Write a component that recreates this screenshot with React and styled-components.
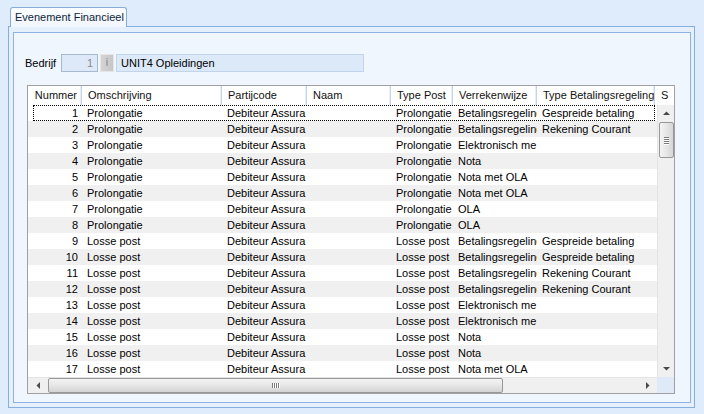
import React from 'react';
import styled, { createGlobalStyle } from 'styled-components';

const Global = createGlobalStyle`
  html, body { margin: 0; padding: 0; }
  body {
    background: #dfecfc;
    font-family: "Liberation Sans", Arial, sans-serif;
    font-size: 11px;
    color: #000;
  }
`;

const Page = styled.div`
  width: 704px;
  height: 414px;
  box-sizing: border-box;
  padding: 7px 9px 0 8px;
  display: flex;
  flex-direction: column;
`;

const TabStrip = styled.div`
  display: flex;
  height: 19px;
  padding-left: 2px;
  position: relative;
  z-index: 1;
`;

const Tab = styled.div`
  width: 117px;
  height: 20px;
  box-sizing: border-box;
  border: 1px solid #88acd8;
  border-bottom: none;
  border-radius: 3px 3px 0 0;
  background: linear-gradient(#fbfdff, #f1f6fd);
  padding: 2px 0 0 4px;
  line-height: 14px;
  color: #0f1e3c;
  white-space: nowrap;
`;

const Panel = styled.div`
  height: 382px;
  box-sizing: border-box;
  border: 1px solid #86aee0;
  background: #e6f0fd;
  padding: 5px 3px 4px 4px;
  display: flex;
`;

const GroupBox = styled.div`
  flex: 1;
  border: 1px solid #8db3e4;
  background: #eff6fe;
  padding: 21px 14px 0 13px;
  display: flex;
  flex-direction: column;
`;

const FieldRow = styled.div`
  display: flex;
  align-items: center;
  height: 18px;
`;

const Label = styled.span`
  width: 36px;
  margin-left: -2px;
`;

const Input = styled.div`
  box-sizing: border-box;
  width: ${p => p.$w}px;
  height: 18px;
  border: 1px solid ${p => p.$border || '#a8b8cc'};
  background: ${p => p.$bg || '#dde9f8'};
  text-align: ${p => p.$align || 'left'};
  padding: 0 4px;
  line-height: 16px;
  color: ${p => p.$color || '#000'};
  margin-right: 2px;
`;

const InfoButton = styled.div`
  box-sizing: border-box;
  width: 14px;
  height: 18px;
  background: linear-gradient(90deg, #d4d4d4, #c6c6c6);
  border: 1px solid #e6e6e6;
  color: #9c9c9c;
  font-weight: bold;
  text-align: center;
  line-height: 16px;
  margin-right: 2px;
  font-size: 10px;
`;

const Grid = styled.div`
  margin-top: 13px;
  width: 648px;
  height: 309px;
  box-sizing: border-box;
  border: 1px solid #a0a0a0;
  background: #fff;
  display: grid;
  grid-template-columns: 1fr 17px;
  grid-template-rows: 19px 1fr 16px;
  overflow: hidden;
`;

const HeaderRow = styled.div`
  grid-column: 1 / 3;
  display: flex;
  background: #fff;
  overflow: hidden;
`;

const HeadCell = styled.div`
  flex: 0 0 ${p => p.$w}px;
  box-sizing: border-box;
  height: 19px;
  line-height: 19px;
  padding: 0 ${p => (p.$right ? '4px' : '0')} 0 ${p => (p.$right ? '0' : '6px')};
  text-align: ${p => (p.$right ? 'right' : 'left')};
  border-right: 1px solid #c3d5ec;
  box-shadow: inset -1px 0 0 #e6eef8;
  white-space: nowrap;
  overflow: hidden;
  color: #111;
`;

const Body = styled.div`
  overflow: hidden;
`;

const Row = styled.div`
  display: flex;
  height: 16px;
  line-height: 16px;
  background: ${p => (p.$alt ? '#f0f0f0' : '#fff')};
  position: relative;
`;

const Focus = styled.div`
  position: absolute;
  left: 5px;
  top: 0;
  width: 622px;
  height: 16px;
  box-sizing: border-box;
  border: 1px dotted #000;
  pointer-events: none;
`;

const Cell = styled.div`
  flex: 0 0 ${p => p.$w}px;
  box-sizing: border-box;
  padding: 0 ${p => (p.$right ? '4px' : '0')} 0 ${p => (p.$right ? '0' : '5px')};
  text-align: ${p => (p.$right ? 'right' : 'left')};
  white-space: nowrap;
  overflow: hidden;
`;

const VScroll = styled.div`
  background: #f0f0f0;
  border-left: 1px solid #e4e4e4;
  display: flex;
  flex-direction: column;
  align-items: center;
`;

const HScroll = styled.div`
  background: #f0f0f0;
  border-top: 1px solid #e4e4e4;
  display: flex;
  align-items: center;
`;

const Arrow = styled.div`
  width: ${p => (p.$h ? '19px' : '16px')};
  height: ${p => (p.$h ? '15px' : '16px')};
  display: flex;
  align-items: center;
  justify-content: center;
  flex: none;
`;

const VThumb = styled.div`
  margin-top: 1px;
  width: 15px;
  height: 36px;
  box-sizing: border-box;
  border: 1px solid #989898;
  border-radius: 2px;
  background: linear-gradient(90deg, #f4f4f4, #e6e6e6 50%, #d6d6d6);
  display: flex;
  flex-direction: column;
  align-items: center;
  justify-content: center;
  gap: 1px;
`;

const HThumb = styled.div`
  margin-left: 1px;
  width: 455px;
  height: 15px;
  box-sizing: border-box;
  border: 1px solid #989898;
  border-radius: 2px;
  background: linear-gradient(#f4f4f4, #e6e6e6 50%, #d4d4d4);
  display: flex;
  align-items: center;
  justify-content: center;
  gap: 1px;
`;

const Grip = styled.span`
  display: block;
  background: #7a7a7a;
  width: ${p => (p.$v ? '1px' : '5px')};
  height: ${p => (p.$v ? '5px' : '1px')};
  box-shadow: ${p => (p.$v ? '1px 0 0 #fff' : '0 1px 0 #fff')};
`;

const Spacer = styled.div`
  flex: 1;
`;

const Corner = styled.div`
  background: #dfe9f8;
`;

const cols = [
  { k: 'n', t: 'Nummer', w: 54, right: true },
  { k: 'o', t: 'Omschrijving', w: 140 },
  { k: 'p', t: 'Partijcode', w: 85 },
  { k: 'm', t: 'Naam', w: 84 },
  { k: 'tp', t: 'Type Post', w: 62 },
  { k: 'v', t: 'Verrekenwijze', w: 84 },
  { k: 'tb', t: 'Type Betalingsregeling', w: 118 },
  { k: 's', t: 'S', w: 40 },
];

const raw = [
  ['Prolongatie', 'Betalingsregeling', 'Gespreide betaling'],
  ['Prolongatie', 'Betalingsregeling', 'Rekening Courant'],
  ['Prolongatie', 'Elektronisch me', ''],
  ['Prolongatie', 'Nota', ''],
  ['Prolongatie', 'Nota met OLA', ''],
  ['Prolongatie', 'Nota met OLA', ''],
  ['Prolongatie', 'OLA', ''],
  ['Prolongatie', 'OLA', ''],
  ['Losse post', 'Betalingsregeling', 'Gespreide betaling'],
  ['Losse post', 'Betalingsregeling', 'Gespreide betaling'],
  ['Losse post', 'Betalingsregeling', 'Rekening Courant'],
  ['Losse post', 'Betalingsregeling', 'Rekening Courant'],
  ['Losse post', 'Elektronisch me', ''],
  ['Losse post', 'Elektronisch me', ''],
  ['Losse post', 'Nota', ''],
  ['Losse post', 'Nota', ''],
  ['Losse post', 'Nota met OLA', ''],
];

const rows = raw.map((r, i) => ({
  n: String(i + 1),
  o: r[0],
  p: 'Debiteur Assura',
  m: '',
  tp: r[0],
  v: r[1],
  tb: r[2],
  s: '',
}));

const Tri = ({ dir }) => {
  const pts = {
    up: '0,4 3.5,0.5 7,4',
    down: '0,0 3.5,3.5 7,0',
    left: '4,0 0.5,3.5 4,7',
    right: '0,0 3.5,3.5 0,7',
  }[dir];
  const vert = dir === 'up' || dir === 'down';
  return (
    <svg width={vert ? 7 : 4} height={vert ? 4 : 7} viewBox={vert ? '0 0 7 4' : '0 0 4 7'}>
      <polygon points={pts} fill="#4a4a4a" />
    </svg>
  );
};

export default function App() {
  return (
    <>
      <Global />
      <Page>
        <TabStrip>
          <Tab>Evenement Financieel</Tab>
        </TabStrip>
        <Panel>
          <GroupBox>
            <FieldRow>
              <Label>Bedrijf</Label>
              <Input $w={37} $align="right" $color="#8a8a8a" $border="#a9b9cd" $bg="#dde9f8">1</Input>
              <InfoButton>i</InfoButton>
              <Input $w={248} $border="#c2d4ea" $bg="#dce9f8">UNIT4 Opleidingen</Input>
            </FieldRow>
            <Grid>
              <HeaderRow>
                {cols.map(c => (
                  <HeadCell key={c.k} $w={c.w} $right={c.right}>{c.t}</HeadCell>
                ))}
              </HeaderRow>
              <Body>
                {rows.map((r, i) => (
                  <Row key={i} $alt={i % 2 === 1}>
                    {cols.map(c => (
                      <Cell key={c.k} $w={c.w} $right={c.right}>{r[c.k]}</Cell>
                    ))}
                    {i === 0 && <Focus />}
                  </Row>
                ))}
              </Body>
              <VScroll>
                <Arrow><Tri dir="up" /></Arrow>
                <VThumb>
                  <Grip /><Grip /><Grip /><Grip />
                </VThumb>
                <Spacer />
                <Arrow><Tri dir="down" /></Arrow>
              </VScroll>
              <HScroll>
                <Arrow $h><Tri dir="left" /></Arrow>
                <HThumb>
                  <Grip $v /><Grip $v /><Grip $v /><Grip $v />
                </HThumb>
                <Spacer />
                <Arrow $h><Tri dir="right" /></Arrow>
              </HScroll>
              <Corner />
            </Grid>
          </GroupBox>
        </Panel>
      </Page>
    </>
  );
}
